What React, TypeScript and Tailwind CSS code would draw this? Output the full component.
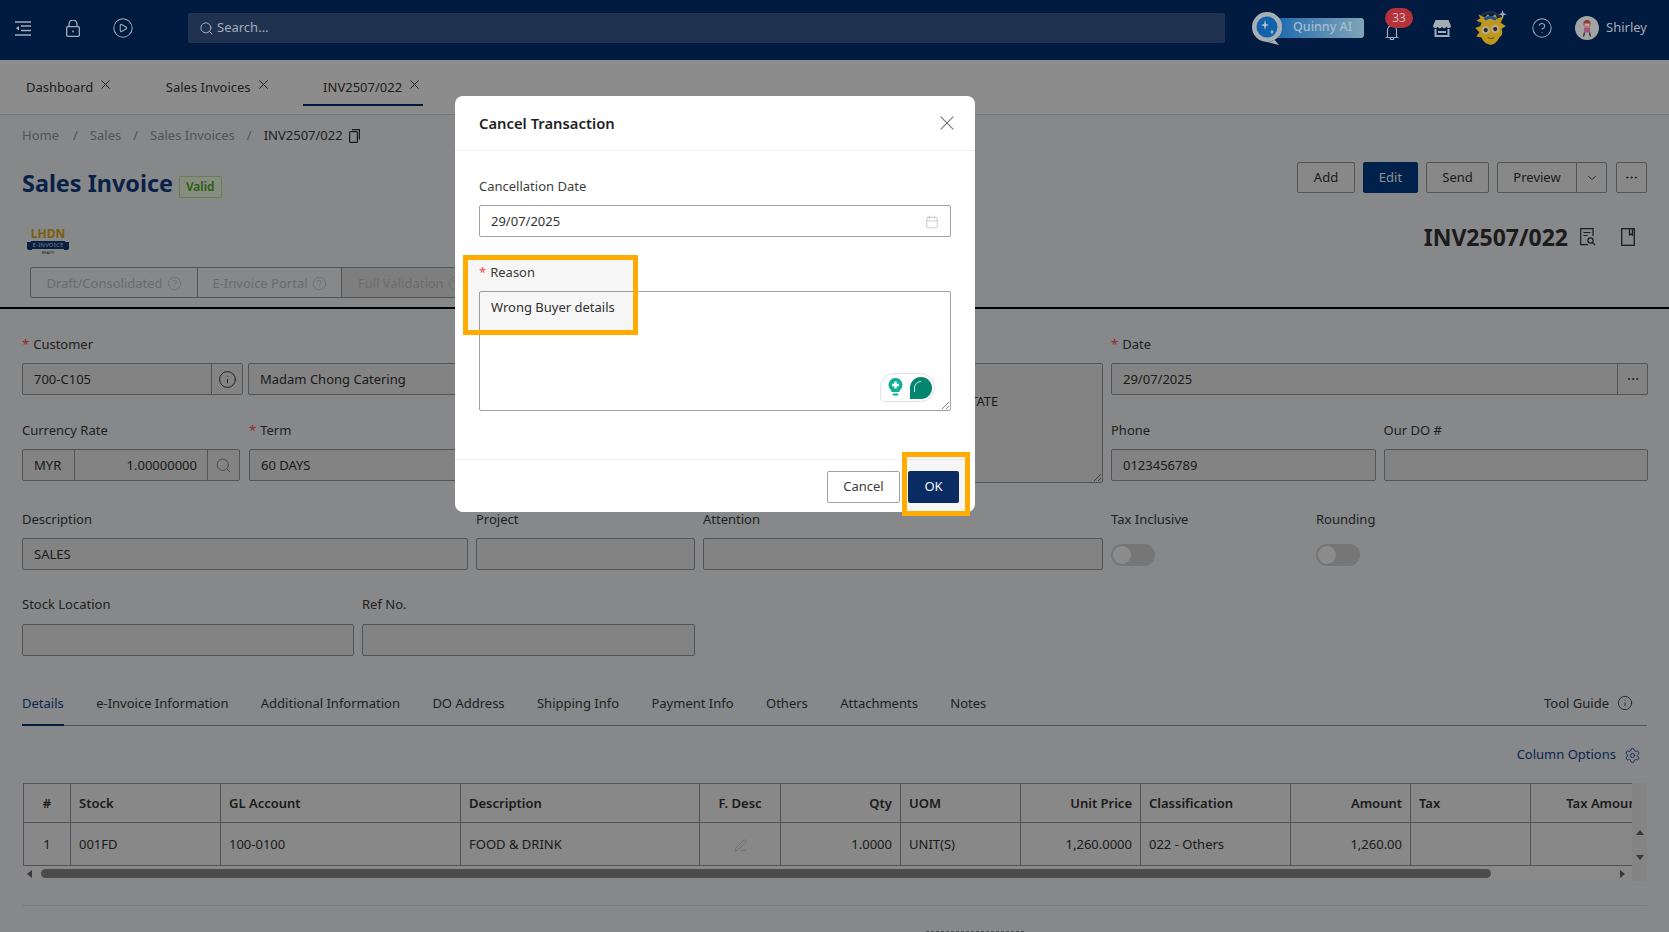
import React from "react";
import { Calendar, Search, Info, ChevronDown, Ellipsis, Settings, CirclePlay, CircleHelp, PenLine } from "lucide-react";

function Label({ children, req, className = "mb-[9px]" }: { children: React.ReactNode; req?: boolean; className?: string }) {
  return (
    <div className={"h-5 leading-5 text-[#3d3d3d] whitespace-nowrap " + className}>
      {req && <span className="text-[#ff4d4f] mr-[4px]">*</span>}
      {children}
    </div>
  );
}

function Box({ children, className = "" }: { children?: React.ReactNode; className?: string }) {
  return (
    <div className={"h-8 border border-[#9a9a9a] bg-[#efefef] rounded-[2px] flex items-center px-[11px] pt-[2px] text-[#333] whitespace-nowrap overflow-hidden " + className}>
      {children}
    </div>
  );
}

function Cross({ size, className = "" }: { size: number; className?: string }) {
  return (
    <svg className={className} width={size} height={size} viewBox="0 0 10 10" fill="none" stroke="currentColor" strokeWidth={size > 10 ? 0.8 : 1.1}>
      <path d="M0.5 0.5L9.5 9.5M9.5 0.5L0.5 9.5" />
    </svg>
  );
}

function Tab({ text, active }: { text: string; active?: boolean }) {
  return (
    <div className={"h-9 pl-5 pr-[4px] flex items-start pt-[7px] gap-[8px] border-b-2 " + (active ? "border-[#003173]" : "border-transparent")}>
      <span className="text-[#3a3a3a] leading-5">{text}</span>
      <Cross size={9} className="text-[#333] mt-[3px]" />
    </div>
  );
}

function Btn({ children, className = "" }: { children: React.ReactNode; className?: string }) {
  return (
    <div className={"h-[31px] flex items-center justify-center border rounded-[2px] " + className}>
      {children}
    </div>
  );
}

const plain = "border-[#9a9a9a] bg-[#f7f7f7] text-[#333] ";

const columns = [
  { t: "#", v: "1", w: 47, a: "text-center" },
  { t: "Stock", v: "001FD", w: 150, a: "text-left" },
  { t: "GL Account", v: "100-0100", w: 240, a: "text-left" },
  { t: "Description", v: "FOOD & DRINK", w: 239, a: "text-left" },
  { t: "F. Desc", v: "", w: 81, a: "text-center" },
  { t: "Qty", v: "1.0000", w: 120, a: "text-right" },
  { t: "UOM", v: "UNIT(S)", w: 120, a: "text-left" },
  { t: "Unit Price", v: "1,260.0000", w: 120, a: "text-right" },
  { t: "Classification", v: "022 - Others", w: 150, a: "text-left" },
  { t: "Amount", v: "1,260.00", w: 120, a: "text-right" },
  { t: "Tax", v: "", w: 120, a: "text-left" },
  { t: "Tax Amount", v: "", w: 120, a: "text-right" },
];

const detailTabs = ["e-Invoice Information", "Additional Information", "DO Address", "Shipping Info", "Payment Info", "Others", "Attachments", "Notes"];

function Mascot() {
  return (
    <svg width="36" height="38" viewBox="0 0 34 36">
      <path d="M5 15 Q6 3 16 3 Q26 3 27 15" fill="none" stroke="#1c2f58" strokeWidth="2" />
      <path d="M8 13 L3 11 L7 9 L5 5 L11 8 L14 5 L17 8 L21 5 L23 9 L29 7 L26 13 L31 16 L27 19 Q29 24 25 27 Q22 33 17 34 Q10 33 8 27 L3 26 L6 22 L2 18 L7 16 Z" fill="#bd981c" />
      <path d="M10 9 Q16 4 23 9 L21 11 L16 9 L12 11 Z" fill="#1e4d96" />
      <circle cx="12" cy="20" r="4" fill="#b8ac8e" />
      <circle cx="21" cy="19" r="4" fill="#b8ac8e" />
      <circle cx="12" cy="20" r="2" fill="#2d2a22" />
      <circle cx="21" cy="19" r="2" fill="#2d2a22" />
      <path d="M14 27 Q17 29 20 27" stroke="#7a5c10" fill="none" />
      <path d="M28 1 L29 4 L32 5 L29 6 L28 9 L27 6 L24 5 L27 4 Z" fill="#a4acb4" />
    </svg>
  );
}

function Quinny() {
  return (
    <div className="relative w-[112px] h-[33px]">
      <div className="absolute left-[22px] top-[6px] w-[90px] h-5 rounded-[3px] bg-gradient-to-r from-[#1668ad] to-[#7fa5b6] flex items-center pl-[19px] text-[#a9bccb] text-[12.5px] font-medium">
        Quinny AI
      </div>
      <svg className="absolute left-0 top-0" width="36" height="33" viewBox="0 0 36 33">
        <path d="M15 0 A15 15 0 1 1 15 30 L27 33 L22 27 A15 15 0 0 0 15 0 Z" fill="#a6afb6" />
        <circle cx="15" cy="15" r="15" fill="#a6afb6" />
        <circle cx="15" cy="15" r="10.5" fill="#1262ab" />
        <path d="M13 8 L14 11.9 L17 13 L14 14.1 L13 18 L12 14.1 L9 13 L12 11.9 Z" fill="#b8c4ce" />
        <path d="M20 17 L20.6 19.4 L22.5 20 L20.6 20.6 L20 23 L19.4 20.6 L17.5 20 L19.4 19.4 Z" fill="#b8c4ce" />
      </svg>
    </div>
  );
}

function Avatar() {
  return (
    <svg width="24" height="24" viewBox="0 0 24 24">
      <circle cx="12" cy="12" r="12" fill="#a3a3a3" />
      <circle cx="12" cy="7.5" r="3.6" fill="#8a3d36" />
      <rect x="9.5" y="7.5" width="5" height="3" fill="#c9a093" />
      <rect x="9" y="11.5" width="6" height="5" fill="#a0587a" />
      <path d="M9.5 16.5 L8.5 20.5 M14.5 16.5 L15.5 20.5" stroke="#2a2a2a" strokeWidth="1.2" />
    </svg>
  );
}

function LhdnLogo() {
  return (
    <div className="w-[42px] h-[27px] flex flex-col items-center">
      <div className="text-[12px] leading-[11px] font-bold text-[#e0ac14]">LHDN</div>
      <div className="relative mt-[2px] w-[34px] h-[8px] bg-[#0f3878] flex items-center justify-center">
        <span className="text-[6px] leading-[8px] text-[#d7dce4] tracking-[0.2px]">E-INVOICE</span>
        <span className="absolute -left-[4px] top-[1px] w-[5px] h-[8px] bg-[#0f3878] rounded-bl-[2px]" />
        <span className="absolute -right-[4px] top-[1px] w-[5px] h-[8px] bg-[#0f3878] rounded-br-[2px]" />
      </div>
      <div className="text-[4px] leading-[5px] text-[#2b3a55] mt-[1px]">READY</div>
    </div>
  );
}

export default function App() {
  return (
    <div className="relative w-[1669px] h-[932px] overflow-hidden bg-[#f6f7f9] text-[13px] [font-family:'Noto_Sans',sans-serif]">
      {/* top bar */}
      <header className="relative z-20 h-[60px] pb-[4px] bg-[#001b3f] flex items-center pl-[15px] text-[#aab0ba]">
        <svg width="16" height="15" viewBox="0 0 16 15" fill="none" stroke="#a4acb8" strokeWidth="1.3">
          <path d="M0 1h16M6 5h10M6 9.5h10M0 14h16" />
          <path d="M4 5 L0.8 7.3 L4 9.6 Z" fill="#a4acb8" stroke="none" />
        </svg>
        <svg className="ml-[35px]" width="14" height="17" viewBox="0 0 14 17" fill="none" stroke="#a4acb8" strokeWidth="1.3">
          <rect x="0.7" y="6.7" width="12.6" height="9.6" rx="1" />
          <path d="M3 6.5V4a4 4 0 0 1 8 0v2.5" />
          <circle cx="7" cy="11.5" r="0.9" fill="#a4acb8" stroke="none" />
        </svg>
        <CirclePlay className="ml-[32px]" size={22} strokeWidth={1.1} color="#a4acb8" />
        <div className="ml-[54px] w-[1037px] h-[30px] bg-[#1f3350] rounded-[2px] flex items-center pl-[11px] gap-[3px] text-[#a4acb8] text-[13px]">
          <Search size={15} strokeWidth={1.6} />
          <span>Search...</span>
        </div>
        <div className="ml-[27px]"><Quinny /></div>
        <div className="relative ml-[21px] w-[28px] h-[30px]">
          <svg className="absolute left-0 top-[12px]" width="14" height="16" viewBox="0 0 14 16" fill="none" stroke="#a4acb8" strokeWidth="1.2">
            <path d="M2.5 12V5a4.5 4.5 0 0 1 9 0v7" />
            <path d="M0.5 12.5h13M5.5 13v1.5h3V13" />
          </svg>
          <div className="absolute left-0 -top-[5px] w-[28px] h-5 rounded-[10px] bg-[#b5323a] text-[#d2b9bc] text-[12px] flex items-center justify-center">33</div>
        </div>
        <svg className="ml-[20px]" width="18" height="17" viewBox="0 0 18 17">
          <path d="M2.5 0h13L18 6a2.3 2.3 0 0 1-4.5.4 2.3 2.3 0 0 1-4.5 0 2.3 2.3 0 0 1-4.5 0A2.3 2.3 0 0 1 0 6Z" fill="#a4acb8" />
          <path d="M1.5 9v8h15V9h-2v6H3.5V9Z" fill="#a4acb8" />
          <rect x="5" y="11" width="8" height="2" fill="#a4acb8" />
        </svg>
        <div className="ml-[22px]"><Mascot /></div>
        <CircleHelp className="ml-[22px]" size={22} strokeWidth={1.1} color="#a4acb8" />
        <div className="ml-[22px]"><Avatar /></div>
        <span className="ml-[7px] text-[13px] text-[#a6acb6]">Shirley</span>
      </header>

      {/* page */}
      <div className="relative h-[872px]">
        {/* document tabs */}
        <div className="h-[55px] bg-white border-b border-[#dcdcdc] pl-[6px] pt-[10px] flex gap-[31.5px]">
          <Tab text="Dashboard" />
          <Tab text="Sales Invoices" />
          <Tab text="INV2507/022" active />
        </div>

        {/* heading block */}
        <div className="h-[194px] border-b-2 border-black px-[22px] pt-[11px]">
          <div className="flex items-center h-5 text-[#9a9a9a]">
            <span>Home</span>
            <span className="ml-[14px]">/</span>
            <span className="ml-[12px]">Sales</span>
            <span className="ml-[12px]">/</span>
            <span className="ml-[12px]">Sales Invoices</span>
            <span className="ml-[12px]">/</span>
            <span className="ml-[12px] text-[#3c3c3c]">INV2507/022</span>
            <svg className="ml-[6px]" width="11" height="14" viewBox="0 0 11 14" fill="none" stroke="#2e2e2e" strokeWidth="1.2">
              <rect x="0.6" y="2.6" width="7.8" height="10.8" rx="1" />
              <path d="M3 0.6h7.4v10" />
            </svg>
          </div>
          <div className="mt-[16px] flex justify-between items-start">
            <div className="flex items-start mt-[4px]">
              <h1 className="text-[23.4px] leading-[34px] font-bold text-[#0f3d85]">Sales Invoice</h1>
              <span className="ml-[6px] mt-[10px] h-[22px] px-[6px] flex items-center border border-[#b7eb8f] bg-[#f6ffed] text-[#47b012] text-[12px] font-semibold rounded-[2px]">Valid</span>
            </div>
            <div className="flex">
              <Btn className={plain + "w-[58px]"}>Add</Btn>
              <Btn className="w-[55px] ml-2 bg-[#003d8a] border-[#003d8a] text-white">Edit</Btn>
              <Btn className={plain + "w-[63px] ml-2"}>Send</Btn>
              <Btn className={plain + "w-[80px] ml-2 rounded-r-none"}>Preview</Btn>
              <Btn className={plain + "w-[31px] -ml-px rounded-l-none"}><ChevronDown size={14} strokeWidth={1.5} /></Btn>
              <Btn className={plain + "w-[31px] ml-[9px]"}><Ellipsis size={15} strokeWidth={1.5} /></Btn>
            </div>
          </div>
          <div className="flex justify-between items-start mt-[28px]">
            <div>
              <div className="ml-[5px]"><LhdnLogo /></div>
              <div className="mt-[12px] ml-[8px] flex h-[31px] pt-0 text-[#c4c4c4]">
                <div className="w-[168px] border border-[#9a9a9a] rounded-l-[2px] flex items-center justify-center gap-[4px] pt-[2px]">
                  Draft/Consolidated
                  <CircleHelp size={15} strokeWidth={1.3} />
                </div>
                <div className="w-[144px] border-y border-r border-[#9a9a9a] flex items-center justify-center gap-[4px] pt-[2px]">
                  E-Invoice Portal
                  <CircleHelp size={15} strokeWidth={1.3} />
                </div>
                <div className="w-[130px] border-y border-[#9a9a9a] bg-[#e6e6e6] flex items-center pl-[16px] gap-[4px] pt-[2px]">
                  Full Validation
                  <CircleHelp size={15} strokeWidth={1.3} />
                </div>
              </div>
            </div>
            <div className="flex items-center mr-[12px]">
              <span className="text-[23px] leading-[18px] font-bold text-[#333] mr-[12px]">INV2507/022</span>
              <svg width="16" height="18" viewBox="0 0 16 18" fill="none" stroke="#333" strokeWidth="1.2">
                <path d="M13 8V0.7H0.7v16H8" />
                <path d="M3.5 4.5h7M3.5 7.5h4" />
                <circle cx="10.5" cy="12.5" r="2.6" />
                <path d="M12.5 14.5L15 17" />
              </svg>
              <svg className="ml-[25px]" width="14" height="18" viewBox="0 0 14 18" fill="none" stroke="#333" strokeWidth="1.3">
                <rect x="0.7" y="0.7" width="12.6" height="16.6" />
                <path d="M8.5 1v6l1.5-1 1.5 1V1" />
              </svg>
            </div>
          </div>
        </div>

        {/* form */}
        <div className="px-[22px] pt-[25px]">
          <div className="flex gap-2">
            <div className="w-[1081px] flex gap-2">
              <div className="w-[673px]">
                <Label req>Customer</Label>
                <div className="flex">
                  <Box className="w-[190px] rounded-r-none">700-C105</Box>
                  <Box className="w-[32px] -ml-px rounded-l-none justify-center !px-0 !pt-0"><Info size={19} strokeWidth={1.2} /></Box>
                  <Box className="ml-[5px] flex-1">Madam Chong Catering</Box>
                </div>
                <div className="flex mt-[25px] gap-[9px]">
                  <div className="w-[218px]">
                    <Label>Currency Rate</Label>
                    <div className="flex">
                      <Box className="w-[53px] rounded-r-none">MYR</Box>
                      <Box className="flex-1 -ml-px rounded-none justify-end !pr-[10px]">1.00000000</Box>
                      <Box className="w-[33px] -ml-px rounded-l-none justify-center !px-0 !pt-0 text-[#777]"><Search size={17} strokeWidth={1.2} /></Box>
                    </div>
                  </div>
                  <div className="flex-1">
                    <Label req>Term</Label>
                    <Box>60 DAYS</Box>
                  </div>
                </div>
              </div>
              <div className="flex-1">
                <Label>Address</Label>
                <div className="relative h-[120px] border border-[#9a9a9a] bg-[#efefef] rounded-[2px] pl-[259px] pt-[27px] leading-5 text-[#333]">
                  STATE
                  <svg className="absolute right-0 bottom-0" width="10" height="10" viewBox="0 0 10 10" stroke="#555" strokeWidth="0.8">
                    <path d="M9 2L2 9M9 6L6 9" />
                  </svg>
                </div>
              </div>
            </div>
            <div className="flex-1 -mr-px">
              <Label req>Date</Label>
              <div className="flex">
                <Box className="flex-1 rounded-r-none">29/07/2025</Box>
                <Box className="w-[31px] -ml-px rounded-l-none justify-center !px-0 !pt-0"><Ellipsis size={14} strokeWidth={1.5} /></Box>
              </div>
              <div className="flex gap-2 mt-[25px]">
                <div className="flex-1">
                  <Label>Phone</Label>
                  <Box>0123456789</Box>
                </div>
                <div className="flex-1">
                  <Label>Our DO #</Label>
                  <Box />
                </div>
              </div>
            </div>
          </div>

          <div className="flex gap-2 mt-[26px]">
            <div className="w-[446px]">
              <Label>Description</Label>
              <Box>SALES</Box>
            </div>
            <div className="w-[219px]">
              <Label>Project</Label>
              <Box />
            </div>
            <div className="w-[400px]">
              <Label>Attention</Label>
              <Box />
            </div>
            <div className="w-[197px]">
              <Label>Tax Inclusive</Label>
              <div className="w-11 h-[22px] mt-[15px] rounded-full bg-[#d8d8d8] p-[2px]"><div className="w-[18px] h-[18px] rounded-full bg-white" /></div>
            </div>
            <div>
              <Label>Rounding</Label>
              <div className="w-11 h-[22px] mt-[15px] rounded-full bg-[#d8d8d8] p-[2px]"><div className="w-[18px] h-[18px] rounded-full bg-white" /></div>
            </div>
          </div>

          <div className="flex gap-2 mt-[24px] w-[673px]">
            <div className="w-[332px]">
              <Label className="mb-[10px]">Stock Location</Label>
              <Box />
            </div>
            <div className="flex-1">
              <Label className="mb-[10px]">Ref No.</Label>
              <Box />
            </div>
          </div>

          {/* detail tabs */}
          <div className="mt-[37px] h-[33px] border-b border-[#9a9a9a] flex justify-between">
            <div className="flex gap-[32.4px]">
              <div className="h-[33px] pb-[12px] leading-5 border-b-2 border-[#003173] text-[#12479a]">Details</div>
              {detailTabs.map((t) => (
                <div key={t} className="leading-5 text-[#3d3d3d]">{t}</div>
              ))}
            </div>
            <div className="flex items-start gap-2 pr-[14px] text-[#3d3d3d]">
              <span className="leading-5">Tool Guide</span>
              <Info size={16} strokeWidth={1.3} className="mt-[2px]" />
            </div>
          </div>
          <div className="mt-[19px] h-5 flex justify-end items-center gap-2 pr-[6px] text-[#12479a]">
            <span>Column Options</span>
            <Settings size={17} strokeWidth={1.3} />
          </div>

          {/* grid */}
          <div className="mt-[18px] ml-px flex h-[98px] bg-[#fafafa]">
            <div className="flex-1 min-w-0">
              <div className="overflow-hidden h-[83px]">
                <table className="table-fixed border-collapse w-[1627px]">
                  <colgroup>
                    {columns.map((c) => <col key={c.t} style={{ width: c.w }} />)}
                  </colgroup>
                  <thead>
                    <tr className="h-[39px]">
                      {columns.map((c) => (
                        <th key={c.t} className={"border border-[#9a9a9a] bg-[#f8f8f8] px-2 pt-[2px] font-semibold text-[#333] whitespace-nowrap overflow-hidden " + c.a}>{c.t}</th>
                      ))}
                    </tr>
                  </thead>
                  <tbody>
                    <tr className="h-[43px]">
                      {columns.map((c) => (
                        <td key={c.t} className={"border border-[#9a9a9a] bg-[#f8f8f8] px-2 pt-[2px] text-[#333] whitespace-nowrap " + c.a}>
                          {c.t === "F. Desc" ? <PenLine size={13} strokeWidth={1.1} className="mx-auto text-[#a8a8a8]" /> : c.v}
                        </td>
                      ))}
                    </tr>
                  </tbody>
                </table>
              </div>
              <div className="h-[15px] flex items-center pl-[4px]">
                <span className="w-0 h-0 border-y-[4px] border-y-transparent border-r-[5px] border-r-[#666]" />
                <div className="ml-[9px] w-[1450px] h-[9px] rounded-full bg-[#8a8a8a]" />
                <div className="flex-1" />
                <span className="w-0 h-0 border-y-[4px] border-y-transparent border-l-[5px] border-l-[#666] mr-[7px]" />
              </div>
            </div>
            <div className="w-[15px] bg-[#f0f0f0] flex flex-col items-center pt-[47px] gap-[20px]">
              <span className="w-0 h-0 border-x-[4px] border-x-transparent border-b-[5px] border-b-[#666]" />
              <span className="w-0 h-0 border-x-[4px] border-x-transparent border-t-[5px] border-t-[#666]" />
            </div>
          </div>
          <div className="mt-[24px] border-t border-[#e4e4e4]" />
          <div className="mt-[25px] ml-[904px] w-[98px] h-[20px] border border-dashed border-[#8a8a8a]" />
        </div>

        {/* modal mask */}
        <div className="absolute inset-0 bg-black/45" />
      </div>

      {/* modal */}
      <div className="absolute z-30 left-[455px] top-[96px] w-[520px] h-[416px] bg-white rounded-[8px] flex flex-col text-[#3d3d3d]">
        <div className="h-[55px] shrink-0 border-b border-[#f0f0f0] pl-6 pr-[21px] flex items-center justify-between">
          <span className="text-[14.8px] font-semibold text-[#1f1f1f]">Cancel Transaction</span>
          <Cross size={14} className="text-[#777]" />
        </div>
        <div className="px-6 pt-[25px] flex-1">
          <div className="h-5 leading-5 mb-[9px]">Cancellation Date</div>
          <div className="h-8 border border-[#a0a0a0] rounded-[2px] flex items-center justify-between pl-[11px] pr-[11px] pt-[2px] text-[#333]">
            <span>29/07/2025</span>
            <Calendar size={14} strokeWidth={1.1} className="text-[#b0b0b0]" />
          </div>
          <div className="h-5 leading-5 mt-[25px] mb-[9px]"><span className="text-[#ff4d4f] mr-[4px]">*</span>Reason</div>
          <div className="relative h-[120px] border border-[#a0a0a0] rounded-[2px] pl-[11px] pt-[5px] leading-5 text-[#333]">
            Wrong Buyer details
            <div className="absolute right-[15px] bottom-[8px] w-[55px] h-[29px] rounded-[15px] rounded-bl-[4px] bg-white border border-[#dfe3e8] flex items-center pl-[7px] gap-[7px]">
              <svg width="15" height="19" viewBox="0 0 15 19">
                <path d="M7.5 0a7 7 0 0 1 4 12.7V14h-8v-1.3A7 7 0 0 1 7.5 0Z" fill="#0fb096" />
                <rect x="4.5" y="15.5" width="6" height="2" rx="1" fill="#0fb096" />
                <path d="M6.3 3.5h2.4v2.3H11v2.4H8.7v2.3H6.3V8.2H4V5.8h2.3Z" fill="#fff" />
              </svg>
              <svg width="22" height="22" viewBox="0 0 22 22">
                <path d="M11 0a11 11 0 0 1 0 22H0V11A11 11 0 0 1 11 0Z" fill="#03856e" />
                <path d="M4.5 15V11A6.5 6.5 0 0 1 11 4.5" fill="none" stroke="#d9efe9" strokeWidth="1" />
              </svg>
            </div>
            <svg className="absolute right-0 bottom-0" width="10" height="10" viewBox="0 0 10 10" stroke="#666" strokeWidth="0.8">
              <path d="M9 2L2 9M9 6L6 9" />
            </svg>
          </div>
        </div>
        <div className="h-[53px] shrink-0 border-t border-[#f0f0f0] pr-4 pt-[11px] flex justify-end gap-2">
          <div className="w-[73px] h-8 border border-[#a0a0a0] rounded-[2px] flex items-center justify-center">Cancel</div>
          <div className="w-[51px] h-8 bg-[#0b2e66] rounded-[2px] flex items-center justify-center text-white">OK</div>
        </div>

        {/* highlight frames */}
        <div className="absolute left-[8px] top-[159px] w-[175px] h-[80px] border-[5px] border-[#ffab00] bg-black/[0.035]" />
        <div className="absolute left-[447px] top-[356px] w-[68px] h-[64px] border-[5px] border-[#ffab00] bg-black/[0.035]" />
      </div>
    </div>
  );
}
